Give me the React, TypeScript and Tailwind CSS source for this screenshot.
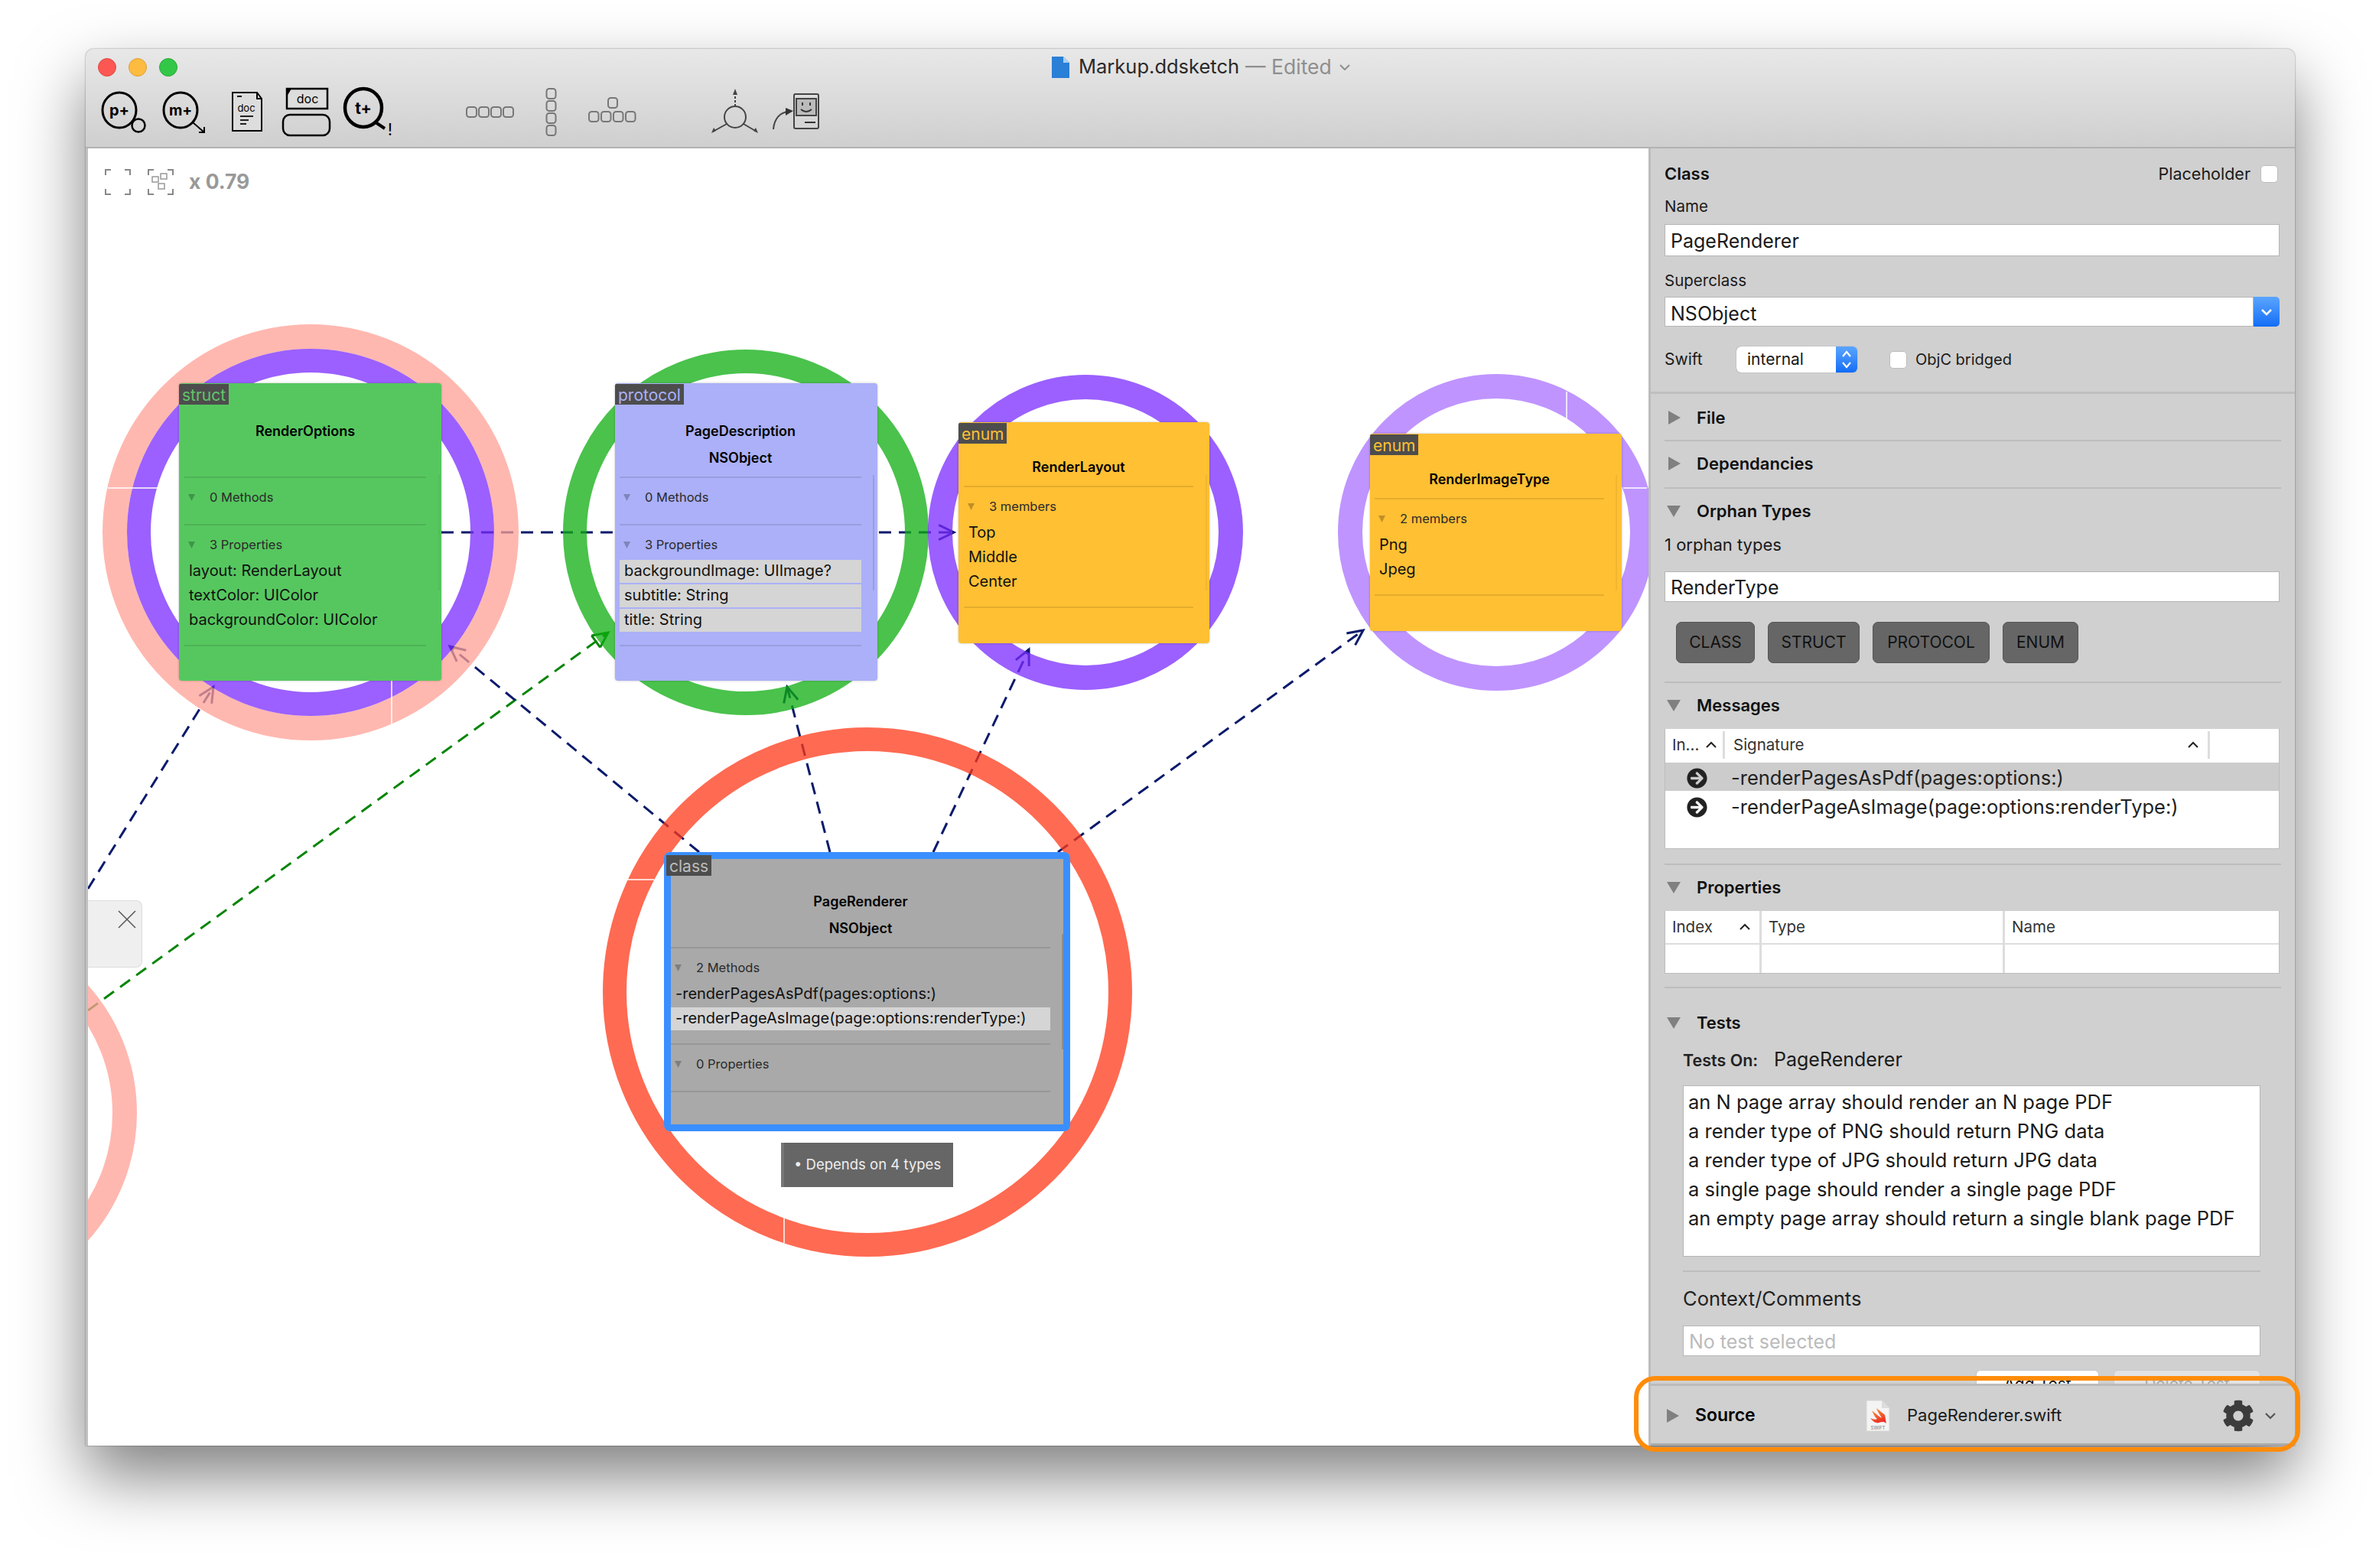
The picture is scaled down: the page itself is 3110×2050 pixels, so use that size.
import React from "react";
import { FaArrowCircleRight, FaCog } from "react-icons/fa";

function Arrow({ x1, y1, x2, y2, color = "#0b1a6b", head = "open" }: { x1: number; y1: number; x2: number; y2: number; color?: string; head?: string }) {
  const a = Math.atan2(y2 - y1, x2 - x1);
  const len = 22;
  const p1 = [x2 - len * Math.cos(a - 0.45), y2 - len * Math.sin(a - 0.45)];
  const p2 = [x2 - len * Math.cos(a + 0.45), y2 - len * Math.sin(a + 0.45)];
  return (
    <g fill="none" stroke={color} strokeWidth={3}>
      <line x1={x1} y1={y1} x2={x2} y2={y2} strokeDasharray="16 10" />
      <polyline points={`${p1[0]},${p1[1]} ${x2},${y2} ${p2[0]},${p2[1]}`} />
      {head === "closed" && <line x1={p1[0]} y1={p1[1]} x2={p2[0]} y2={p2[1]} />}
    </g>
  );
}

function Ring({ cx, cy, r, w, color }: { cx: number; cy: number; r: number; w: number; color: string }) {
  return <circle cx={cx} cy={cy} r={r - w / 2} fill="none" stroke={color} strokeWidth={w} />;
}

function Hair({ x1, y1, x2, y2 }: { x1: number; y1: number; x2: number; y2: number }) {
  return <line x1={x1} y1={y1} x2={x2} y2={y2} stroke="#ffffff" strokeWidth={1.5} />;
}

type Section = { label: string; items: string[]; selected?: number[] };

function Card({ className, innerClass, tag, tagText, title, subtitle, titlePad, sections, scroll }: { className: string; innerClass: string; tag: string; tagText: string; title: string; subtitle?: string; titlePad: string; sections: Section[]; scroll: string }) {
  return (
    <div className={`absolute overflow-hidden ${className}`}>
      <div className={`absolute h-[27px] px-[4px] bg-[#4d4d4d] text-[21px] leading-[30px] ${tagText}`}>{tag}</div>
      <div className={`absolute w-[2px] h-[151px] ${scroll}`} />
      <div className={innerClass}>
        <div className={`${titlePad} text-center text-[#000] font-semibold text-[18px]`}>
          <div className="h-[35px] leading-[35px]">{title}</div>
          {subtitle && <div className="h-[35px] leading-[35px]">{subtitle}</div>}
        </div>
        {sections.map((s) => (
          <div key={s.label} className="border-t-[2px] border-black/10 pb-[16px]">
            <div className="h-[44px] pt-[6px] flex items-center pl-[5px] text-[16.5px] text-[#2a2a2a]">
              <svg width="9" height="11" viewBox="0 0 9 11" className="mr-[19px]"><polygon points="0,1 9,1 4.5,10" fill="#00000040" /></svg>
              {s.label}
            </div>
            {s.items.map((it, i) => (
              <div key={it} className="h-[32px] py-[1px]">
                <div className={`h-[30px] leading-[28px] pl-[6px] text-[20px] text-[#111] whitespace-nowrap ${s.selected?.includes(i) ? "bg-[#d5d5d5]" : ""}`}>{it}</div>
              </div>
            ))}
          </div>
        ))}
        <div className="border-t-[2px] border-black/10" />
      </div>
    </div>
  );
}

function Tri({ open }: { open?: boolean }) {
  return open ? (
    <svg width="18" height="15" viewBox="0 0 18 15" className="ml-[3px] mr-[21px] shrink-0"><polygon points="0,0 18,0 9,15" fill="#808080" /></svg>
  ) : (
    <svg width="16" height="18" viewBox="0 0 16 18" className="ml-[5px] mr-[21px] shrink-0"><polygon points="0,0 16,9 0,18" fill="#808080" /></svg>
  );
}

function SectionHead({ label, open, className }: { label: string; open?: boolean; className: string }) {
  return (
    <div className={`flex items-center h-[32px] font-semibold text-[22px] text-[#111] ${className}`}>
      <Tri open={open} />
      {label}
    </div>
  );
}

function Divider({ className }: { className: string }) {
  return <div className={`h-[2px] bg-[#bdbdbd] ${className}`} />;
}

function Field({ value, className, muted }: { value: string; className: string; muted?: boolean }) {
  return (
    <div className={`bg-white border border-[#b5b5b5] flex items-center pl-[7px] text-[25px] ${muted ? "text-[#bbbbbb]" : "text-[#1a1a1a]"} ${className}`}>{value}</div>
  );
}

function Check() {
  return <div className="w-[23px] h-[23px] bg-white rounded-[5px] border border-[#bdbdbd] shrink-0" />;
}

function Chev() {
  return (
    <svg width="16" height="10" viewBox="0 0 16 10" className="shrink-0"><polyline points="2,8 8,2 14,8" fill="none" stroke="#222" strokeWidth="2" /></svg>
  );
}

function TypeButton({ label, className }: { label: string; className: string }) {
  return (
    <div className={`h-[54px] rounded-[7px] bg-[#666666] border border-[#555] flex items-center justify-center text-[21px] text-[#111] ${className}`}>{label}</div>
  );
}

function Toolbar() {
  return (
    <div className="flex h-[68px] pl-[18px]">
      <svg width="70" height="68" viewBox="130 112 70 68" className="shrink-0">
        <ellipse cx="156" cy="144" rx="22" ry="23" fill="none" stroke="#000" strokeWidth="3" />
        <circle cx="181" cy="164" r="8.5" fill="none" stroke="#000" strokeWidth="2.5" />
        <text x="156" y="151" textAnchor="middle" fontSize="20" fontWeight="700" fill="#000">p+</text>
      </svg>
      <svg width="70" height="68" viewBox="208 112 70 68" className="shrink-0 ml-[8px]">
        <ellipse cx="236" cy="144" rx="22" ry="23" fill="none" stroke="#000" strokeWidth="3" />
        <path d="M252 160 L267 173 M267 166 V173 H260" fill="none" stroke="#000" strokeWidth="2" />
        <text x="236" y="151" textAnchor="middle" fontSize="19" fontWeight="700" fill="#000">m+</text>
      </svg>
      <svg width="45" height="68" viewBox="300 112 45 68" className="shrink-0 ml-[22px]">
        <path d="M304 121 H336 L342 129 V171 H304 Z M336 121 V129 H342" fill="#ddd" stroke="#000" strokeWidth="2" />
        <line x1="310" y1="126" x2="316" y2="126" stroke="#000" strokeWidth="2" />
        <text x="322" y="146" textAnchor="middle" fontSize="13" fill="#000">doc</text>
        <path d="M314 152 H331 M314 157 H325 M314 162 H322" stroke="#222" strokeWidth="2" />
      </svg>
      <svg width="70" height="68" viewBox="365 112 70 68" className="shrink-0 ml-[20px]">
        <rect x="375" y="116" width="53" height="26" fill="#ddd" stroke="#000" strokeWidth="2.5" />
        <path d="M375 116 L375 126 L381 116 Z" fill="#000" />
        <text x="402" y="135" textAnchor="middle" fontSize="16" fill="#000">doc</text>
        <rect x="370" y="150" width="61" height="27" rx="9" fill="none" stroke="#000" strokeWidth="2.5" />
      </svg>
      <svg width="70" height="68" viewBox="448 112 70 68" className="shrink-0 ml-[13px]">
        <ellipse cx="475" cy="141" rx="24" ry="25" fill="none" stroke="#000" strokeWidth="4.5" />
        <line x1="491" y1="160" x2="503" y2="168" stroke="#000" strokeWidth="4" />
        <text x="475" y="149" textAnchor="middle" fontSize="21" fontWeight="700" fill="#000">t+</text>
        <text x="510" y="177" textAnchor="middle" fontSize="22" fill="#000">!</text>
      </svg>
      <svg width="70" height="68" viewBox="605 112 70 68" className="shrink-0 ml-[87px]">
        {[610, 626, 642, 658].map((x) => <rect key={x} x={x} y="140" width="13" height="13" rx="3.5" fill="none" stroke="#777" strokeWidth="2" />)}
      </svg>
      <svg width="20" height="68" viewBox="710 112 20 68" className="shrink-0 ml-[35px]">
        {[116, 132, 148, 164].map((y) => <rect key={y} x="714.5" y={y} width="12" height="13" rx="3.5" fill="none" stroke="#777" strokeWidth="2" />)}
      </svg>
      <svg width="70" height="68" viewBox="765 112 70 68" className="shrink-0 ml-[35px]">
        <rect x="795" y="128" width="12" height="13" rx="3.5" fill="none" stroke="#777" strokeWidth="2" />
        {[770, 786, 802, 818].map((x) => <rect key={x} x={x} y="146" width="12.5" height="13" rx="3.5" fill="none" stroke="#777" strokeWidth="2" />)}
      </svg>
      <svg width="70" height="68" viewBox="925 112 70 68" className="shrink-0 ml-[90px]">
        <circle cx="961" cy="153" r="14" fill="none" stroke="#444" strokeWidth="2" />
        <line x1="961" y1="139" x2="961" y2="120" stroke="#444" strokeWidth="2" strokeDasharray="3 2" />
        <path d="M961 116 L958 124 H964 Z M930 174 L936 171 L933 167 Z M991 174 L985 171 L988 167 Z" fill="#444" />
        <line x1="950" y1="162" x2="932" y2="172" stroke="#444" strokeWidth="2" />
        <line x1="972" y1="162" x2="989" y2="172" stroke="#444" strokeWidth="2" />
      </svg>
      <svg width="70" height="68" viewBox="1005 112 70 68" className="shrink-0 ml-[10px]">
        <path d="M1011 169 C1012 155 1020 147 1030 146" fill="none" stroke="#444" strokeWidth="2" />
        <path d="M1037 145 L1027 141 V151 Z" fill="#333" />
        <rect x="1038" y="123" width="32" height="45" rx="2" fill="none" stroke="#444" strokeWidth="2" />
        <rect x="1041" y="129" width="26" height="22" fill="#bbb" stroke="#444" strokeWidth="2" />
        <path d="M1049 134 V138 M1059 134 V138 M1047 143 Q1054 149 1061 143 M1052 160 H1066" fill="none" stroke="#333" strokeWidth="2" />
      </svg>
    </div>
  );
}

function Canvas() {
  return (
    <div className="relative w-[2040px] h-full bg-white overflow-hidden">
      <svg width="2040" height="1696" viewBox="115 194 2040 1696" className="absolute left-0 top-0">
        <Arrow x1={115} y1={1162} x2={279} y2={898} />
        <Arrow x1={115} y1={1321} x2={795} y2={827} color="#078508" head="closed" />
        <Arrow x1={914} y1={1114} x2={588} y2={845} />
        <Arrow x1={1085} y1={1114} x2={1029} y2={898} />
        <Arrow x1={1220} y1={1114} x2={1345} y2={849} />
        <Arrow x1={1383} y1={1114} x2={1782} y2={824} />
        <Arrow x1={577} y1={696} x2={1247} y2={696} />
        <Ring cx={406} cy={696} r={272} w={32} color="rgba(255,160,150,0.75)" />
        <Ring cx={406} cy={696} r={240} w={31} color="rgba(122,43,255,0.75)" />
        <Ring cx={975} cy={696} r={239} w={31} color="rgba(14,174,16,0.75)" />
        <Ring cx={1419} cy={696} r={206} w={32} color="rgba(122,43,255,0.75)" />
        <Ring cx={1956} cy={696} r={207} w={32} color="rgba(170,112,255,0.75)" />
        <Ring cx={1134} cy={1297} r={346} w={31} color="rgba(255,56,24,0.75)" />
        <Ring cx={-71} cy={1455} r={250} w={32} color="rgba(255,160,150,0.75)" />
        <Hair x1={141} y1={638} x2={206} y2={638} />
        <Hair x1={512} y1={890} x2={512} y2={947} />
        <Hair x1={820} y1={1150} x2={855} y2={1150} />
        <Hair x1={1025} y1={1592} x2={1025} y2={1625} />
        <Hair x1={2048} y1={512} x2={2048} y2={548} />
        <Hair x1={2122} y1={638} x2={2153} y2={638} />
      </svg>

      <div className="absolute left-[22px] top-[24px] flex items-center">
        <svg width="34" height="34" viewBox="0 0 34 34"><path d="M1 8 V1 H8 M26 1 H33 V8 M1 26 V33 H8 M33 26 V33 H26" fill="none" stroke="#888" strokeWidth="2" /></svg>
        <svg width="34" height="34" viewBox="0 0 34 34" className="ml-[22px]">
          <path d="M1 8 V1 H8 M26 1 H33 V8 M1 26 V33 H8 M33 26 V33 H26" fill="none" stroke="#888" strokeWidth="2" />
          <path d="M6 10 h8 v7 h-8 z M17 6 h8 v7 h-8 z M14 19 h8 v7 h-8 z" fill="none" stroke="#999" strokeWidth="1.5" />
        </svg>
        <span className="ml-[20px] text-[26.5px] font-bold text-[#999999]">x 0.79</span>
      </div>

      <Card
        className="left-[119px] top-[307px] w-[343px] h-[389px] rounded-[4px] bg-[#56c75f] shadow-[0_0_3px_rgba(0,0,0,0.25)]"
        innerClass="pl-[7px] pr-[20px]"
        tag="struct"
        tagText="left-0 top-[1px] text-[#62c56a]"
        title="RenderOptions"
        titlePad="pt-[45px] pb-[42px]"
        scroll="left-[339px] top-[120px] bg-black/5"
        sections={[
          { label: "0 Methods", items: [] },
          { label: "3 Properties", items: ["layout: RenderLayout", "textColor: UIColor", "backgroundColor: UIColor"] },
        ]}
      />
      <Card
        className="left-[689px] top-[307px] w-[343px] h-[389px] rounded-[4px] bg-[#abb0f8] shadow-[0_0_3px_rgba(0,0,0,0.25)]"
        innerClass="pl-[6px] pr-[21px]"
        tag="protocol"
        tagText="left-0 top-[1px] text-[#abb0f8]"
        title="PageDescription"
        subtitle="NSObject"
        titlePad="pt-[45px] pb-[7px]"
        scroll="left-[337px] top-[120px] bg-black/10"
        sections={[
          { label: "0 Methods", items: [] },
          { label: "3 Properties", items: ["backgroundImage: UIImage?", "subtitle: String", "title: String"], selected: [0, 1, 2] },
        ]}
      />
      <Card
        className="left-[1138px] top-[358px] w-[328px] h-[289px] rounded-[4px] bg-[#ffc033] shadow-[0_0_3px_rgba(0,0,0,0.25)]"
        innerClass="pl-[7px] pr-[21px]"
        tag="enum"
        tagText="left-0 top-[1px] text-[#ffc033]"
        title="RenderLayout"
        titlePad="pt-[41px] pb-[7px]"
        scroll="left-[323px] top-[69px] bg-black/5"
        sections={[{ label: "3 members", items: ["Top", "Middle", "Center"] }]}
      />
      <Card
        className="left-[1676px] top-[373px] w-[329px] h-[258px] rounded-[4px] bg-[#ffc033] shadow-[0_0_3px_rgba(0,0,0,0.25)]"
        innerClass="pl-[6px] pr-[23px]"
        tag="enum"
        tagText="left-0 top-[1px] text-[#ffc033]"
        title="RenderImageType"
        titlePad="pt-[42px] pb-[7px]"
        scroll="left-[321px] top-[54px] bg-black/5"
        sections={[{ label: "2 members", items: ["Png", "Jpeg"] }]}
      />
      <Card
        className="left-[753px] top-[920px] w-[531px] h-[365px] rounded-[8px] bg-[#a9a9a9] shadow-[inset_0_0_0_9px_#3a8fff]"
        innerClass="pl-[9px] pr-[26px]"
        tag="class"
        tagText="left-[3px] top-[4px] text-[#bdbdbd]"
        title="PageRenderer"
        subtitle="NSObject"
        titlePad="pt-[47px] pb-[7px]"
        scroll="left-[520px] top-[107px] bg-black/15"
        sections={[
          { label: "2 Methods", items: ["-renderPagesAsPdf(pages:options:)", "-renderPageAsImage(page:options:renderType:)"], selected: [1] },
          { label: "0 Properties", items: [] },
        ]}
      />

      <div className="absolute left-[906px] top-[1300px] w-[225px] h-[58px] bg-[#666666] border-l-[4px] border-[#777] flex items-center pl-[13px] text-[18.5px] text-[#eeeeee] whitespace-nowrap">
        • Depends on 4 types
      </div>

      <div className="absolute left-0 top-[983px] w-[71px] h-[88px] bg-[#efefef] border border-l-0 border-[#dddddd] rounded-r-[8px] flex justify-end pt-[12px] pr-[7px]">
        <svg width="24" height="24" viewBox="0 0 24 24"><path d="M1 1 L23 23 M23 1 L1 23" stroke="#555" strokeWidth="1.5" /></svg>
      </div>
    </div>
  );
}

function Inspector() {
  return (
    <div className="w-[845px] h-full bg-[#d0d0d0] border-l-[3px] border-[#bcbcbc] flex flex-col text-[#1a1a1a]">
      <div className="flex-1 min-h-0 overflow-hidden">
        <div className="pl-[18px] pr-[20px] pt-[20px]">
          <div className="flex items-center h-[26px] pr-[2px]">
            <span className="font-semibold text-[22px] text-[#111]">Class</span>
            <span className="ml-auto mr-[13px] text-[21.5px]">Placeholder</span>
            <Check />
          </div>
          <div className="mt-[18px] h-[24px] leading-[24px] text-[20.5px]">Name</div>
          <Field value="PageRenderer" className="mt-[11px] h-[42px] pt-[3px]" />
          <div className="mt-[20px] h-[24px] leading-[24px] text-[20.5px]">Superclass</div>
          <div className="mt-[9px] h-[39px] flex">
            <Field value="NSObject" className="flex-1 h-full pt-[6px]" />
            <div className="w-[34px] h-full rounded-r-[5px] bg-gradient-to-b from-[#5aa5ff] to-[#0f6cf5] flex items-center justify-center">
              <svg width="16" height="10" viewBox="0 0 16 10"><polyline points="2,2 8,8 14,2" fill="none" stroke="#fff" strokeWidth="2.5" /></svg>
            </div>
          </div>
          <div className="mt-[26px] h-[34px] flex items-center text-[20px]">
            <span className="w-[94px] text-[21px]">Swift</span>
            <div className="w-[158px] h-full flex rounded-[6px] overflow-hidden bg-white shadow-[0_0_1px_rgba(0,0,0,0.5)]">
              <span className="w-[130px] pl-[14px] leading-[34px] text-[21px]">internal</span>
              <div className="flex-1 bg-gradient-to-b from-[#5aa5ff] to-[#0f6cf5] flex items-center justify-center">
                <svg width="16" height="26" viewBox="0 0 16 26"><path d="M3 9 L8 3 L13 9 M3 17 L8 23 L13 17" fill="none" stroke="#fff" strokeWidth="2.2" /></svg>
              </div>
            </div>
            <div className="ml-[42px] mr-[11px]"><Check /></div>
            <span>ObjC bridged</span>
          </div>
        </div>
        <div className="mt-[25px] h-[3px] bg-[#bfbfbf]" />
        <div className="pl-[18px] pr-[18px]">
          <SectionHead label="File" className="mt-[15px]" />
          <Divider className="mt-[13px]" />
          <SectionHead label="Dependancies" className="mt-[13px]" />
          <Divider className="mt-[15px]" />
          <SectionHead label="Orphan Types" open className="mt-[13px]" />
          <div className="mt-[16px] h-[24px] leading-[24px] text-[22px]">1 orphan types</div>
          <Field value="RenderType" className="mt-[23px] h-[40px] mr-[2px] pt-[3px]" />
          <div className="mt-[26px] flex pl-[15px]">
            <TypeButton label="CLASS" className="w-[103px]" />
            <TypeButton label="STRUCT" className="w-[120px] ml-[17px]" />
            <TypeButton label="PROTOCOL" className="w-[153px] ml-[17px]" />
            <TypeButton label="ENUM" className="w-[99px] ml-[17px]" />
          </div>
          <Divider className="mt-[24px]" />

          <SectionHead label="Messages" open className="mt-[13px]" />
          <div className="mt-[15px] h-[157px] mr-[2px] bg-white border border-[#bdbdbd] border-t-0">
            <div className="h-[44px] flex items-center pb-[2px] text-[20.5px] text-[#333]">
              <div className="w-[78px] h-[36px] flex items-center pl-[9px] border-r-[3px] border-[#dddddd]">
                <span>In...</span>
                <span className="ml-[8px]"><Chev /></span>
              </div>
              <div className="w-[634px] h-[36px] flex items-center justify-between pl-[11px] pr-[11px] border-r-[3px] border-[#dddddd]">
                <span>Signature</span>
                <Chev />
              </div>
            </div>
            <div className="h-[37px] bg-[#cccccc] flex items-center text-[25.5px] text-[#222] pt-[3px]">
              <span className="w-[86px] flex justify-center pr-[4px] text-[#222] text-[27px]"><FaArrowCircleRight /></span>
              -renderPagesAsPdf(pages:options:)
            </div>
            <div className="h-[38px] flex items-center text-[25.5px] text-[#222] pt-[4px]">
              <span className="w-[86px] flex justify-center pr-[4px] text-[#222] text-[27px]"><FaArrowCircleRight /></span>
              -renderPageAsImage(page:options:renderType:)
            </div>
          </div>
          <Divider className="mt-[19px]" />

          <SectionHead label="Properties" open className="mt-[13px]" />
          <div className="mt-[15px] h-[82px] mr-[2px] bg-white border border-[#bdbdbd] border-t-0 grid grid-cols-[126px_318px_1fr] grid-rows-[44px_1fr] text-[20.5px] text-[#333]">
            <div className="flex items-center pl-[9px] border-r-[3px] border-b-[2px] border-[#dddddd] justify-between pr-[11px]"><span>Index</span><Chev /></div>
            <div className="flex items-center pl-[9px] border-r-[3px] border-b-[2px] border-[#dddddd]">Type</div>
            <div className="flex items-center pl-[9px] border-b-[2px] border-[#dddddd]">Name</div>
            <div className="border-r-[3px] border-[#dddddd]" />
            <div className="border-r-[3px] border-[#dddddd]" />
            <div />
          </div>
          <Divider className="mt-[17px]" />

          <SectionHead label="Tests" open className="mt-[29px]" />
          <div className="ml-[24px] mr-[27px]">
            <div className="mt-[18px] h-[30px] flex items-center">
              <span className="font-semibold text-[21.5px] w-[119px] text-[#222]">Tests On:</span>
              <span className="text-[25px]">PageRenderer</span>
            </div>
            <div className="mt-[18px] h-[224px] bg-white border border-[#b5b5b5] pl-[6px] pt-[2px] text-[25.5px] leading-[38px] text-[#1a1a1a] whitespace-nowrap">
              <div>an N page array should render an N page PDF</div>
              <div>a render type of PNG should return PNG data</div>
              <div>a render type of JPG should return JPG data</div>
              <div>a single page should render a single page PDF</div>
              <div>an empty page array should return a single blank page PDF</div>
            </div>
            <Divider className="mt-[18px]" />
            <div className="mt-[21px] h-[28px] leading-[28px] text-[25.5px] text-[#222]">Context/Comments</div>
            <Field value="No test selected" className="mt-[21px] h-[40px] pt-[3px]" muted />
            <div className="mt-[18px] flex justify-end">
              <div className="w-[161px] h-[40px] bg-white rounded-[6px] border border-[#c5c5c5] text-center text-[21px] leading-[36px] text-[#111]">Add Test</div>
              <div className="w-[192px] h-[40px] ml-[19px] bg-[#e3e3e3] rounded-[6px] border border-[#c9c9c9] text-center text-[21px] leading-[36px] text-[#aaa]">Delete Test</div>
            </div>
          </div>
        </div>
      </div>
      <div className="h-[81px] shrink-0 border-t-[3px] border-b-[3px] border-t-[#bbbbbb] border-b-[#aaaaaa] flex items-center pl-[16px] pr-[24px] pt-[2px] bg-[#d0d0d0]">
        <Tri />
        <span className="w-[223px] font-semibold text-[23px] text-black">Source</span>
        <svg width="32" height="42" viewBox="0 0 32 42" className="shrink-0">
          <defs>
            <linearGradient id="swiftGrad" x1="0" y1="0" x2="0.4" y2="1">
              <stop offset="0" stopColor="#f8a13c" />
              <stop offset="1" stopColor="#ee2f26" />
            </linearGradient>
          </defs>
          <path d="M1 1 H21 L31 11 V41 H1 Z" fill="#f4f4f4" stroke="#d6d6d6" />
          <path d="M21 1 V11 H31" fill="#ddd" />
          <path d="M8 14 C13 18 17 22 21 24 C19 20 15 15 14 11 C19 15 23 18 25 20 C26 24 26 28 27 31 C24 28 20 29 17 30 C13 31 9 28 6 24 C10 26 13 26 15 25 C12 23 10 18 8 14 Z" fill="url(#swiftGrad)" />
          <text x="16" y="39" textAnchor="middle" fontSize="6" fill="#777">SWIFT</text>
        </svg>
        <span className="ml-[22px] text-[22px] text-[#1a1a1a]">PageRenderer.swift</span>
        <span className="ml-auto text-[#3c3c3c] text-[42px]"><FaCog /></span>
        <svg width="16" height="10" viewBox="0 0 16 10" className="ml-[13px] shrink-0"><polyline points="2,2 8,8 14,2" fill="none" stroke="#555" strokeWidth="2.2" /></svg>
      </div>
    </div>
  );
}

export default function App() {
  return (
    <div className="w-[3110px] h-[2050px] bg-white overflow-hidden pt-[64px] pl-[112px] [font-family:Inter,sans-serif]">
      <div className="relative w-[2888px] h-[1826px] rounded-t-[10px] bg-[#c6c6c6] flex flex-col shadow-[0_40px_85px_rgba(0,0,0,0.5),0_0_2px_rgba(0,0,0,0.5)]">
        <div className="h-[130px] shrink-0 rounded-t-[10px] bg-gradient-to-b from-[#e8e8e8] to-[#cfcfcf] border-b-[2px] border-[#b2b2b2]">
          <div className="h-[47px] flex items-center pl-[16px]">
            <span className="w-[24px] h-[24px] rounded-full bg-[#fc5753] border border-[#df4744]" />
            <span className="w-[24px] h-[24px] rounded-full bg-[#fdbc40] border border-[#de9f34] ml-[16px]" />
            <span className="w-[24px] h-[24px] rounded-full bg-[#33c748] border border-[#27aa35] ml-[16px]" />
            <svg width="23" height="28" viewBox="0 0 23 28" className="ml-[1143px] shrink-0"><path d="M0 0 H15 L23 8 V28 H0 Z" fill="#2a7fd6" /><path d="M15 0 V8 H23 Z" fill="#a9d0f5" /></svg>
            <span className="ml-[12px] text-[25.5px] text-[#2a2a2a]">Markup.ddsketch</span>
            <span className="ml-[8px] text-[26.5px] text-[#8e8e8e]">— Edited</span>
            <svg width="14" height="8" viewBox="0 0 14 8" className="ml-[10px]"><polyline points="1,1 7,7 13,1" fill="none" stroke="#8e8e8e" strokeWidth="2" /></svg>
          </div>
          <div className="pt-[1px]"><Toolbar /></div>
        </div>
        <div className="flex-1 min-h-0 flex pl-[3px] bg-[#c0c0c0]">
          <Canvas />
          <Inspector />
        </div>
        <div className="absolute left-[2024px] top-[1735px] w-[871px] h-[99px] rounded-[28px] border-[6px] border-[#ff8c0a] pointer-events-none" />
      </div>
    </div>
  );
}
